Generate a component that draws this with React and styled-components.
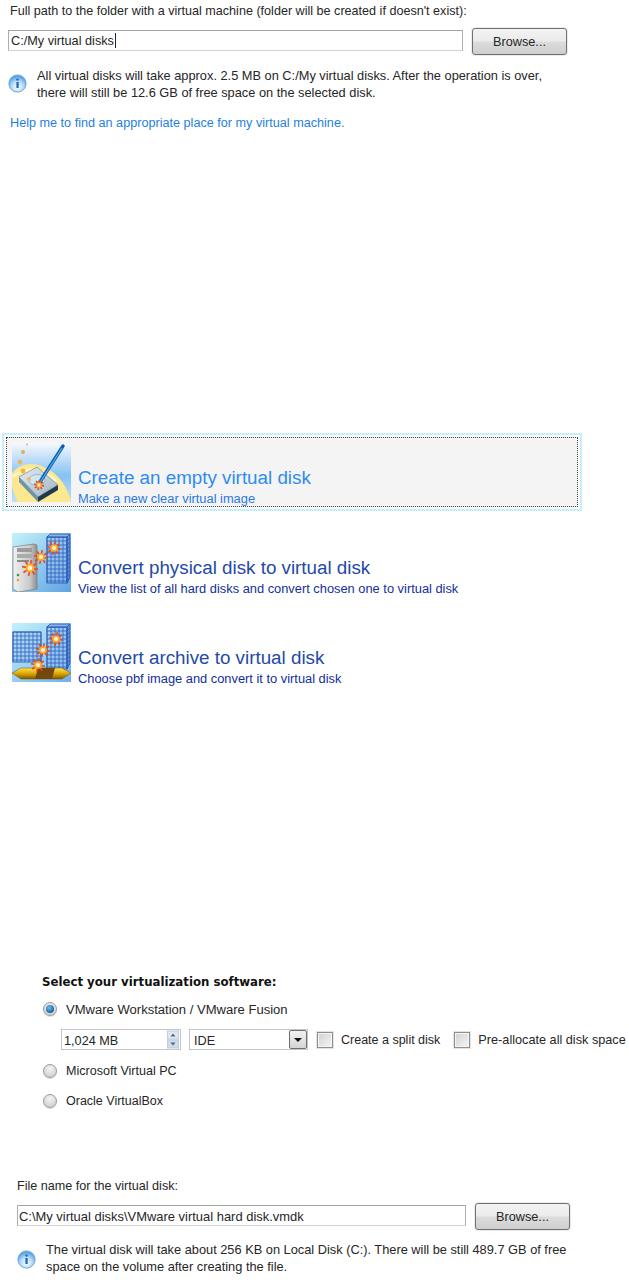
import styled, { createGlobalStyle } from 'styled-components';

const GlobalStyle = createGlobalStyle`
  html, body {
    margin: 0;
    background: #fff;
  }
  body {
    font-family: 'Liberation Sans', Arial, sans-serif;
    font-size: 12.7px;
    color: #262626;
  }
`;

const Page = styled.div`
  width: 629px;
  height: 1280px;
  overflow: hidden;
`;

const Section = styled.section`
  display: flex;
  flex-direction: column;
  align-items: flex-start;
  margin-top: ${(p) => p.$top || 0}px;
  padding-left: ${(p) => p.$left || 0}px;
`;

const Label = styled.div`
  font-size: 12.6px;
  line-height: ${(p) => p.$height || 20}px;
  padding-top: ${(p) => p.$nudge || 0}px;
  padding-left: ${(p) => p.$indent || 0}px;
  white-space: nowrap;
`;

const PathRow = styled.div`
  display: flex;
  align-items: flex-start;
  gap: 9px;
  margin-top: ${(p) => p.$top}px;
`;

const TextField = styled.div`
  box-sizing: border-box;
  width: ${(p) => p.$width}px;
  height: 21px;
  margin-top: 2px;
  padding-left: ${(p) => p.$indent}px;
  border: 1px solid #abadb3;
  border-top-color: #a2a4a8;
  border-bottom-color: #d0d2d6;
  font-size: ${(p) => p.$size}px;
  line-height: 21px;
  white-space: nowrap;
`;

const Caret = styled.span`
  display: inline-block;
  width: 1px;
  height: 15px;
  margin-left: 1px;
  vertical-align: -3px;
  background: #222;
`;

const BrowseButton = styled.button`
  box-sizing: border-box;
  width: 95px;
  height: 27px;
  padding: 0;
  border: 1px solid #707070;
  border-radius: 3px;
  box-shadow: 0 0 0 1px #eeece6;
  background: linear-gradient(#f3f3f3 0%, #ebebeb 48%, #dcdcdc 52%, #cfcfcf 100%);
  font-family: inherit;
  font-size: 12.7px;
  color: #262626;
`;

const InfoRow = styled.div`
  display: flex;
  align-items: flex-start;
  gap: ${(p) => p.$gap}px;
  margin-top: ${(p) => p.$top}px;
`;

const InfoBadge = styled.svg`
  flex: none;
  width: 19px;
  height: 19px;
  margin-top: ${(p) => p.$top}px;
`;

const InfoText = styled.p`
  margin: 0;
  font-size: 12.8px;
  line-height: 17px;
  white-space: nowrap;
`;

const HelpLink = styled.a`
  margin-top: 14px;
  padding-left: 2px;
  font-size: 12.65px;
  line-height: 16px;
  color: #1f7fe0;
`;

const OptionList = styled.div`
  display: flex;
  flex-direction: column;
  gap: 12px;
  margin-top: 302px;
  margin-left: 2px;
`;

const Option = styled.div`
  box-sizing: border-box;
  width: 580px;
  height: 78px;
  padding: 2px;
  border: 2px solid ${(p) => (p.$active ? '#c8eefa' : 'transparent')};
`;

const OptionInner = styled.div`
  box-sizing: border-box;
  display: flex;
  gap: 7px;
  height: 100%;
  padding: 5px 5px 0;
  border: 1px dotted ${(p) => (p.$active ? '#444' : 'transparent')};
  background: ${(p) => (p.$active ? '#f4f4f4' : 'transparent')};
`;

const OptionIcon = styled.svg`
  flex: none;
  width: 59px;
  height: 59px;
`;

const OptionText = styled.div`
  align-self: flex-end;
  display: flex;
  flex-direction: column;
  margin-bottom: -1px;
  color: ${(p) => (p.$active ? '#2e8bf2' : '#1f4aa8')};
`;

const OptionTitle = styled.div`
  font-size: 18.8px;
  line-height: 24px;
  white-space: nowrap;
`;

const OptionHint = styled.div`
  font-size: 12.85px;
  line-height: 17px;
  white-space: nowrap;
  color: ${(p) => (p.$active ? '#2a78e4' : '#12309a')};
`;

const Heading = styled.div`
  font-family: 'DejaVu Sans', Verdana, sans-serif;
  font-size: 11.75px;
  font-weight: 700;
  line-height: 16px;
  color: #111;
  white-space: nowrap;
`;

const RadioRow = styled.label`
  display: flex;
  align-items: center;
  gap: 9px;
  height: 20px;
  margin-top: ${(p) => p.$top}px;
  margin-left: 1px;
  font-size: ${(p) => p.$size}px;
`;

const Radio = styled.span`
  box-sizing: border-box;
  display: flex;
  align-items: center;
  justify-content: center;
  width: 14px;
  height: 14px;
  border: 1px solid #9a9a9a;
  border-radius: 50%;
  background: radial-gradient(circle at 50% 30%, #f4f4f4, #c8c8c8);
  box-shadow: 0 1px 0 #ddd;
  &::after {
    content: '';
    display: ${(p) => (p.$checked ? 'block' : 'none')};
    width: 8px;
    height: 8px;
    border-radius: 50%;
    background: radial-gradient(circle at 40% 35%, #6fbcee, #14609f 75%);
  }
`;

const ControlsRow = styled.div`
  display: flex;
  align-items: center;
  height: 21px;
  margin-top: 10px;
  margin-left: 19px;
`;

const SpinField = styled.div`
  box-sizing: border-box;
  display: flex;
  align-items: center;
  justify-content: space-between;
  width: 120px;
  height: 21px;
  padding: 0 1px 0 2px;
  border: 1px solid #c4c6ca;
  font-size: 12.7px;
`;

const FieldValue = styled.span`
  padding-top: 2px;
`;

const SpinArrows = styled.svg`
  width: 12px;
  height: 19px;
`;

const SelectField = styled.div`
  box-sizing: border-box;
  display: flex;
  align-items: center;
  justify-content: space-between;
  width: 119px;
  height: 21px;
  margin-left: 8px;
  padding-left: 4px;
  border: 1px solid #c4c6ca;
  font-size: 12.7px;
`;

const SelectArrow = styled.span`
  box-sizing: border-box;
  display: flex;
  align-items: center;
  justify-content: center;
  width: 18px;
  height: 19px;
  border: 1px solid #6f6f6f;
  border-radius: 2px;
  background: linear-gradient(#f2f2f2, #d5d5d5);
  &::after {
    content: '';
    border-top: 4px solid #111;
    border-left: 4px solid transparent;
    border-right: 4px solid transparent;
  }
`;

const CheckLabel = styled.label`
  display: flex;
  align-items: center;
  gap: 8px;
  margin-left: ${(p) => p.$left}px;
  font-size: ${(p) => p.$size}px;
  white-space: nowrap;
`;

const Checkbox = styled.span`
  box-sizing: border-box;
  width: 16px;
  height: 16px;
  border: 1px solid #8e8f8f;
  outline: 1px solid #e6e4dc;
  background: linear-gradient(135deg, #cfd2d6, #f4f4f5);
  box-shadow: inset 0 0 0 1px #f4f4f4;
`;

const Info = ({ top }) => (
  <InfoBadge $top={top} viewBox="0 0 19 19">
    <defs>
      <radialGradient id="infoFill" cx="50%" cy="70%" r="60%">
        <stop offset="0%" stopColor="#ffffff" />
        <stop offset="55%" stopColor="#b9dcf6" />
        <stop offset="100%" stopColor="#5aa4e6" />
      </radialGradient>
    </defs>
    <circle cx="9.5" cy="9.5" r="8.6" fill="url(#infoFill)" stroke="#6aa6dc" />
    <circle cx="9.5" cy="5.6" r="1.2" fill="#1f64c0" />
    <rect x="8.4" y="8" width="2.3" height="6" rx="0.6" fill="#1f64c0" />
  </InfoBadge>
);

// little orange burst used by all three pictures
const Spark = ({ x, y, r = 6 }) => {
  const rays = [10, 55, 100, 145, 190, 235, 280, 325];
  return (
    <g transform={`translate(${x} ${y})`}>
      {rays.map((a) => (
        <line
          key={a}
          x1="0"
          y1="0"
          x2={r * Math.cos((a * Math.PI) / 180)}
          y2={r * Math.sin((a * Math.PI) / 180)}
          stroke="#e8481e"
          strokeWidth="1.6"
        />
      ))}
      <circle r={r * 0.55} fill="#ffa928" />
      <circle r={r * 0.3} fill="#fff6c8" />
    </g>
  );
};

// wire frame block, front face plus an optional narrow side face
const GridBlock = ({ x, y, w, h, step = 4, side = 0 }) => {
  const cols = Array.from({ length: Math.floor(w / step) + 1 }, (_, i) => i * step);
  const rows = Array.from({ length: Math.floor(h / step) + 1 }, (_, i) => i * step);
  return (
    <g transform={`translate(${x} ${y})`} stroke="#2f5cbc" strokeWidth="0.8" fill="none">
      <rect width={w} height={h} fill="#9cc0ee" fillOpacity="0.35" stroke="#2450ad" />
      {cols.map((c) => (
        <line key={c} x1={c} y1="0" x2={c} y2={h} />
      ))}
      {rows.map((r) => (
        <line key={r} x1="0" y1={r} x2={w} y2={r} />
      ))}
      {side > 0 && (
        <g>
          <path d={`M${w} 0 L${w + side} -3 L${w + side} ${h - 6} L${w} ${h} Z`} fill="#3a6cc8" fillOpacity="0.55" stroke="#2450ad" />
          <path d={`M0 0 L${side} -3 L${w + side} -3 L${w} 0 Z`} fill="#7fa6e2" fillOpacity="0.7" stroke="#2450ad" />
          {rows.map((r) => (
            <line key={r} x1={w} y1={r} x2={w + side} y2={r - 3} />
          ))}
        </g>
      )}
    </g>
  );
};

const SkyGradient = ({ id, from, to }) => (
  <linearGradient id={id} x1="0" y1="0" x2="1" y2="1">
    <stop offset="0%" stopColor={from} />
    <stop offset="100%" stopColor={to} />
  </linearGradient>
);

const EmptyDiskIcon = () => (
  <OptionIcon viewBox="0 0 59 59">
    <defs>
      <linearGradient id="emptySky" x1="0" y1="0" x2="0" y2="1">
        <stop offset="0%" stopColor="#f6f9fd" />
        <stop offset="55%" stopColor="#86c2f3" />
        <stop offset="100%" stopColor="#bfe0f8" />
      </linearGradient>
      <linearGradient id="emptyDisk" x1="0" y1="0" x2="1" y2="1">
        <stop offset="0%" stopColor="#e6eef4" />
        <stop offset="100%" stopColor="#9ab3c4" />
      </linearGradient>
    </defs>
    <rect width="59" height="59" fill="url(#emptySky)" />
    <path d="M0 30 C10 18 26 18 42 30 C50 37 56 46 59 59 L6 59 Q0 48 0 42 Z" fill="#fbe88f" />
    <path d="M1 34 C12 24 28 24 44 38" fill="none" stroke="#fff6c4" strokeWidth="3" />
    <path d="M7 34 L25 24 L46 42 L26 54 Z" fill="url(#emptyDisk)" stroke="#5d7f94" strokeWidth="0.6" />
    <path d="M7 34 L7 39 L26 59 L26 54 Z" fill="#6f93a8" />
    <path d="M26 54 L26 59 L46 47 L46 42 Z" fill="#1f3a4a" />
    <ellipse cx="25" cy="37" rx="8" ry="5.5" fill="#cfe6f4" stroke="#7d9bb0" strokeWidth="0.6" />
    <line x1="26" y1="42" x2="51" y2="3" stroke="#0f5fb0" strokeWidth="3.4" strokeLinecap="round" />
    <line x1="27" y1="41" x2="50" y2="5" stroke="#4fb0ea" strokeWidth="1.2" />
    <circle cx="15" cy="1.5" r="1" fill="#f0b060" />
    <circle cx="11" cy="9" r="2" fill="#e8ad52" />
    <circle cx="8" cy="19" r="2.2" fill="#efb55e" />
    <circle cx="11" cy="28" r="2.4" fill="#efb04e" />
    <circle cx="17" cy="36" r="2" fill="#f3b765" />
    <Spark x={27} y={42} r={5} />
  </OptionIcon>
);

const PhysicalDiskIcon = () => (
  <OptionIcon viewBox="0 0 59 59">
    <defs>
      <SkyGradient id="physSky" from="#c4f2fa" to="#5fa3e4" />
      <linearGradient id="physCase" x1="0" y1="0" x2="1" y2="0">
        <stop offset="0%" stopColor="#f2f2f2" />
        <stop offset="70%" stopColor="#c9c9c9" />
        <stop offset="100%" stopColor="#8f8f8f" />
      </linearGradient>
    </defs>
    <rect width="59" height="59" fill="url(#physSky)" />
    <GridBlock x={35} y={4} w={20} h={46} side={3} />
    <path d="M1 14 L22 11 L25 12 L25 56 L6 59 L1 56 Z" fill="url(#physCase)" stroke="#7b7b7b" strokeWidth="0.7" />
    <rect x="5" y="15" width="15" height="4" fill="#9c9c9c" />
    <rect x="5" y="21" width="15" height="4" fill="#ababab" />
    <rect x="5" y="27" width="12" height="2" fill="#8a8a8a" />
    <circle cx="6" cy="42" r="1.3" fill="#22a83c" />
    <circle cx="6" cy="47" r="1.3" fill="#eea020" />
    <Spark x={42} y={15} r={7} />
    <Spark x={29} y={24} r={7} />
    <Spark x={18} y={35} r={8} />
  </OptionIcon>
);

const ArchiveIcon = () => (
  <OptionIcon viewBox="0 0 59 59">
    <defs>
      <SkyGradient id="archSky" from="#c4f2fa" to="#6fb0ea" />
      <linearGradient id="archGold" x1="0" y1="0" x2="0" y2="1">
        <stop offset="0%" stopColor="#ffe24a" />
        <stop offset="55%" stopColor="#d9a000" />
        <stop offset="100%" stopColor="#7a5600" />
      </linearGradient>
    </defs>
    <rect width="59" height="59" fill="url(#archSky)" />
    <GridBlock x={1} y={9} w={28} h={30} />
    <GridBlock x={35} y={4} w={20} h={42} side={3} />
    <path d="M0 50 L9 45 L50 45 L59 50 L50 56 L9 56 Z" fill="url(#archGold)" stroke="#6e5200" strokeWidth="0.5" />
    <path d="M26 45 L43 45 L40 56 L23 56 Z" fill="#74480c" />
    <Spark x={44} y={16} r={7} />
    <Spark x={31} y={27} r={7} />
    <Spark x={26} y={42} r={7} />
  </OptionIcon>
);

const options = [
  {
    Icon: EmptyDiskIcon,
    title: 'Create an empty virtual disk',
    hint: 'Make a new clear virtual image',
    active: true,
  },
  {
    Icon: PhysicalDiskIcon,
    title: 'Convert physical disk to virtual disk',
    hint: 'View the list of all hard disks and convert chosen one to virtual disk',
  },
  {
    Icon: ArchiveIcon,
    title: 'Convert archive to virtual disk',
    hint: 'Choose pbf image and convert it to virtual disk',
  },
];

export default function App() {
  return (
    <Page>
      <GlobalStyle />
      <Section $left={8}>
        <Label $indent={2} $nudge={1}>
          Full path to the folder with a virtual machine (folder will be created if doesn't exist):
        </Label>
        <PathRow $top={7}>
          <TextField $width={455} $size={12.7} $indent={2}>
            C:/My virtual disks
            <Caret />
          </TextField>
          <BrowseButton>Browse...</BrowseButton>
        </PathRow>
        <InfoRow $top={12} $gap={10}>
          <Info top={7} />
          <InfoText>
            All virtual disks will take approx. 2.5 MB on C:/My virtual disks. After the operation is over,
            <br />
            there will still be 12.6 GB of free space on the selected disk.
          </InfoText>
        </InfoRow>
        <HelpLink>Help me to find an appropriate place for my virtual machine.</HelpLink>
      </Section>

      <OptionList>
        {options.map(({ Icon, title, hint, active }) => (
          <Option key={title} $active={active}>
            <OptionInner $active={active}>
              <Icon />
              <OptionText $active={active}>
                <OptionTitle>{title}</OptionTitle>
                <OptionHint $active={active}>{hint}</OptionHint>
              </OptionText>
            </OptionInner>
          </Option>
        ))}
      </OptionList>

      <Section $top={283} $left={42}>
        <Heading>Select your virtualization software:</Heading>
        <RadioRow $top={9} $size={13.05}>
          <Radio $checked />
          VMware Workstation / VMware Fusion
        </RadioRow>
        <ControlsRow>
          <SpinField>
            <FieldValue>1,024 MB</FieldValue>
            <SpinArrows viewBox="0 0 12 19">
              <rect x="0.5" y="1" width="11" height="8" fill="#dfe8f2" stroke="#c4ccd6" />
              <rect x="0.5" y="10" width="11" height="8" fill="#cddcec" stroke="#c4ccd6" />
              <path d="M3.5 6.5 L6 3.5 L8.5 6.5 Z" fill="#46698c" />
              <path d="M3.5 12.5 L6 15.5 L8.5 12.5 Z" fill="#46698c" />
            </SpinArrows>
          </SpinField>
          <SelectField>
            <FieldValue>IDE</FieldValue>
            <SelectArrow />
          </SelectField>
          <CheckLabel $left={9} $size={12.5}>
            <Checkbox />
            Create a split disk
          </CheckLabel>
          <CheckLabel $left={14} $size={12.7}>
            <Checkbox />
            Pre-allocate all disk space
          </CheckLabel>
        </ControlsRow>
        <RadioRow $top={11} $size={12.55}>
          <Radio />
          Microsoft Virtual PC
        </RadioRow>
        <RadioRow $top={10} $size={12.5}>
          <Radio />
          Oracle VirtualBox
        </RadioRow>
      </Section>

      <Section $top={65} $left={17}>
        <Label $height={16} $nudge={2}>File name for the virtual disk:</Label>
        <PathRow $top={9}>
          <TextField $width={449} $size={12.95} $indent={1}>
            C:\My virtual disks\VMware virtual hard disk.vmdk
          </TextField>
          <BrowseButton>Browse...</BrowseButton>
        </PathRow>
        <InfoRow $top={11} $gap={10}>
          <Info top={9} />
          <InfoText>
            The virtual disk will take about 256 KB on Local Disk (C:). There will be still 489.7 GB of free
            <br />
            space on the volume after creating the file.
          </InfoText>
        </InfoRow>
      </Section>
    </Page>
  );
}
